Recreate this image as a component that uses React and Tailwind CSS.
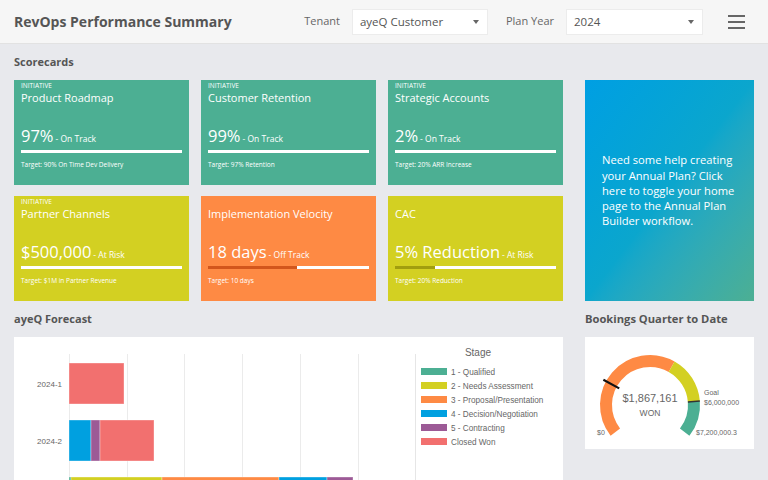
import React from "react";

const GREEN = "#4caf93";
const YELLOW = "#d3d022";
const ORANGE = "#fe8a44";
const BLUE = "#00a0e0";
const PURPLE = "#9c5a96";
const RED = "#f2706f";

const cards = [
  { color: GREEN, initiative: true, title: "Product Roadmap", value: "97%", status: "On Track", target: "Target: 90% On Time Dev Delivery" },
  { color: GREEN, initiative: true, title: "Customer Retention", value: "99%", status: "On Track", target: "Target: 97% Retention" },
  { color: GREEN, initiative: true, title: "Strategic Accounts", value: "2%", status: "On Track", target: "Target: 20% ARR Increase" },
  { color: YELLOW, initiative: true, title: "Partner Channels", value: "$500,000", status: "At Risk", target: "Target: $1M in Partner Revenue" },
  { color: ORANGE, title: "Implementation Velocity", value: "18 days", status: "Off Track", target: "Target: 10 days", fill: 55, fillColor: "#d2561c" },
  { color: YELLOW, title: "CAC", value: "5% Reduction", status: "At Risk", target: "Target: 20% Reduction", fill: 25, fillColor: "#a19e0f" },
];

function Scorecard({ card }) {
  return (
    <div className="h-[105px] px-[7px] text-white flex flex-col" style={{ backgroundColor: card.color }}>
      <div className="mt-[2px] h-[8px] text-[6.5px] leading-[8px] font-medium uppercase">
        {card.initiative ? "Initiative" : ""}
      </div>
      <div className="h-[16px] text-[11px] leading-[16px]">{card.title}</div>
      <div className="mt-[19px] h-[22px] leading-[22px] flex items-baseline whitespace-nowrap">
        <span className="text-[16.5px]">{card.value}</span>
        <span className="text-[8.5px] ml-[2px]">- {card.status}</span>
      </div>
      <div className="mt-[3px] h-[3px] bg-white flex">
        {card.fill ? <div className="h-full" style={{ width: card.fill + "%", backgroundColor: card.fillColor }} /> : null}
      </div>
      <div className="mt-[7px] text-[6.5px] leading-[10px]">{card.target}</div>
    </div>
  );
}

function Select({ value, width }) {
  return (
    <div className={`${width} h-[26px] bg-white border border-[#ececec] flex items-center justify-between pl-[7px] pr-[8px] text-[11.5px] text-[#555]`}>
      <span>{value}</span>
      <span className="w-0 h-0 border-l-[3.5px] border-r-[3.5px] border-t-[4px] border-l-transparent border-r-transparent border-t-[#666]" />
    </div>
  );
}

const legend = [
  ["1 - Qualified", GREEN],
  ["2 - Needs Assessment", YELLOW],
  ["3 - Proposal/Presentation", ORANGE],
  ["4 - Decision/Negotiation", BLUE],
  ["5 - Contracting", PURPLE],
  ["Closed Won", RED],
];

function Forecast() {
  const grid = [55, 113, 170, 228, 286, 344];
  const bars = [
    { y: 26, label: "2024-1", segs: [[55, 110, RED]] },
    { y: 83, label: "2024-2", segs: [[55, 77, BLUE], [77, 86, PURPLE], [86, 140, RED]] },
    { y: 140, label: "", segs: [[55, 57, GREEN], [57, 148, YELLOW], [148, 265, ORANGE], [265, 313, BLUE], [313, 339, PURPLE]] },
  ];
  return (
    <svg width="549" height="143" viewBox="0 0 549 143" className="block" style={{ fontFamily: "'Liberation Sans', Arial, sans-serif" }}>
      {grid.map((x) => (
        <line key={x} x1={x + 0.5} y1="17" x2={x + 0.5} y2="143" stroke="#ebebeb" strokeWidth="1" />
      ))}
      <line x1="401.5" y1="17" x2="401.5" y2="143" stroke="#e6e6e6" strokeWidth="1" />
      {bars.map((b) => (
        <g key={b.y}>
          {b.segs.map(([x1, x2, c]) => (
            <rect key={x1} x={x1} y={b.y} width={x2 - x1} height="41" fill={c} stroke="rgba(255,255,255,0.35)" strokeWidth="1" />
          ))}
          {b.label ? (
            <text x="48" y={b.y + 23.5} textAnchor="end" fontSize="8" fill="#666">{b.label}</text>
          ) : null}
        </g>
      ))}
      <text x="464" y="19" textAnchor="middle" fontSize="10" fill="#666">Stage</text>
      {legend.map(([name, c], i) => (
        <g key={name}>
          <rect x="407" y={31 + i * 14} width="26" height="7" fill={c} />
          <text x="437" y={37.5 + i * 14} fontSize="8.2" fill="#666">{name}</text>
        </g>
      ))}
    </svg>
  );
}

function polar(cx, cy, r, deg) {
  const a = (deg * Math.PI) / 180;
  return [cx + r * Math.sin(a), cy - r * Math.cos(a)];
}

function arc(cx, cy, r, a1, a2) {
  const [x1, y1] = polar(cx, cy, r, a1);
  const [x2, y2] = polar(cx, cy, r, a2);
  const large = a2 - a1 > 180 ? 1 : 0;
  return `M ${x1} ${y1} A ${r} ${r} 0 ${large} 1 ${x2} ${y2}`;
}

function Gauge() {
  const cx = 65;
  const cy = 68;
  const r = 44;
  const start = -128;
  const span = 256;
  const ang = (f) => start + span * f;
  const goal = ang(6000000 / 7200000);
  const mid = ang(0.615);
  const needle = ang(1867161 / 7200000);
  const [n1x, n1y] = polar(cx, cy, 35, needle);
  const [n2x, n2y] = polar(cx, cy, 53, needle);
  const [g1x, g1y] = polar(cx, cy, 38, goal);
  const [g2x, g2y] = polar(cx, cy, 50, goal);
  return (
    <svg width="169" height="112" viewBox="0 0 169 112" className="block" style={{ fontFamily: "'Liberation Sans', Arial, sans-serif" }}>
      <path d={arc(cx, cy, r, start, mid)} fill="none" stroke={ORANGE} strokeWidth="12" />
      <path d={arc(cx, cy, r, mid, goal)} fill="none" stroke={YELLOW} strokeWidth="12" />
      <path d={arc(cx, cy, r, goal, start + span)} fill="none" stroke={GREEN} strokeWidth="12" />
      <line x1={g1x} y1={g1y} x2={g2x} y2={g2y} stroke="#333" strokeWidth="1.5" />
      <line x1={n1x} y1={n1y} x2={n2x} y2={n2y} stroke="#111" strokeWidth="2.2" />
      <text x={cx} y="65" textAnchor="middle" fontSize="11" fill="#666">$1,867,161</text>
      <text x={cx} y="79" textAnchor="middle" fontSize="8.5" fill="#666">WON</text>
      <text x="12" y="98" fontSize="7" fill="#666">$0</text>
      <text x="119" y="58" fontSize="7" fill="#666">Goal</text>
      <text x="119" y="68" fontSize="7" fill="#666">$6,000,000</text>
      <text x="111" y="98" fontSize="7" fill="#666">$7,200,000.3</text>
    </svg>
  );
}

export default function App() {
  return (
    <div className="w-[768px] h-[480px] overflow-hidden bg-[#e8e9ed]" style={{ fontFamily: "'Open Sans', 'Noto Sans', sans-serif" }}>
      <header className="h-[44px] bg-[#f6f6f6] border-b border-[#e2e2e2] flex items-center pl-[14px] pr-[23px]">
        <h1 className="text-[14px] font-bold text-[#555]">RevOps Performance Summary</h1>
        <div className="flex-1" />
        <span className="text-[11px] text-[#666] mr-[12px]">Tenant</span>
        <Select value="ayeQ Customer" width="w-[136px]" />
        <span className="text-[11px] text-[#666] ml-[18px] mr-[12px]">Plan Year</span>
        <Select value="2024" width="w-[137px]" />
        <div className="ml-[25px] flex flex-col gap-[4px]">
          <span className="block w-[17px] h-[2px] bg-[#666]" />
          <span className="block w-[17px] h-[2px] bg-[#666]" />
          <span className="block w-[17px] h-[2px] bg-[#666]" />
        </div>
      </header>

      <main className="px-[14px] pt-[10px]">
        <h2 className="text-[11px] leading-[16px] font-bold text-[#555]">Scorecards</h2>
        <div className="mt-[10px] flex gap-[22px]">
          <div className="w-[549px] grid grid-cols-3 gap-x-[12px] gap-y-[11px]">
            {cards.map((c) => (
              <Scorecard key={c.title} card={c} />
            ))}
          </div>
          <div className="w-[169px] h-[221px] bg-gradient-to-br from-[#009fe3] via-[#0ba6cd] to-[#4caf93] flex items-center pl-[17px] pr-[6px] text-white text-[11.2px] leading-[15.2px]">
            Need some help creating your Annual Plan? Click here to toggle your home page to the Annual Plan Builder workflow.
          </div>
        </div>

        <div className="mt-[10px] flex gap-[22px]">
          <div className="w-[549px]">
            <h2 className="text-[11px] leading-[16px] font-bold text-[#555]">ayeQ Forecast</h2>
            <div className="mt-[10px] bg-white">
              <Forecast />
            </div>
          </div>
          <div className="w-[169px]">
            <h2 className="text-[11.2px] leading-[16px] font-bold text-[#555] whitespace-nowrap">Bookings Quarter to Date</h2>
            <div className="mt-[10px] bg-white">
              <Gauge />
            </div>
          </div>
        </div>
      </main>
    </div>
  );
}
